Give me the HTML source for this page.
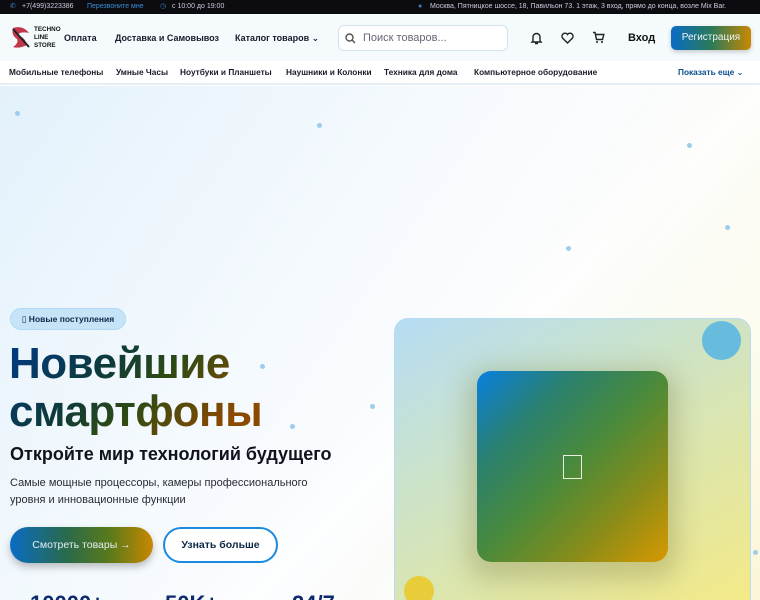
<!DOCTYPE html>
<html><head><meta charset="utf-8"><style>
*{margin:0;padding:0;box-sizing:border-box}
html,body{width:760px;height:600px;overflow:hidden}
body{font-family:"Liberation Sans","DejaVu Sans",sans-serif;position:relative;background:#fff}
.top{position:absolute;left:0;top:0;width:760px;height:14px;background:#0b0b10;font-size:7px;color:#ccd;line-height:14px;white-space:nowrap}
.top span{position:absolute}
.hdr{position:absolute;top:14px;left:0;width:760px;height:47px;background:#f5fafd}
.nav{position:absolute;top:61px;left:0;width:760px;height:24px;background:#fff;border-bottom:2px solid #e6eef5;font-size:8.3px;font-weight:bold;color:#1a1a2a;white-space:nowrap}
.nav span{position:absolute;top:6px}
.hero{position:absolute;top:86px;left:0;width:760px;height:514px;overflow:hidden;background:linear-gradient(125deg,#e3f1fb 0%,#f3f9fd 35%,#fafcfe 55%,#fdfcf2 80%,#fbf6d8 100%)}
.dot{position:absolute;width:5px;height:5px;border-radius:50%;background:#9ccdee}
.hl{font-size:9px;font-weight:bold;color:#1a1a2a;position:absolute;top:19px;white-space:nowrap}
</style></head><body>
<div class="top">
<span style="left:10px;color:#3a7fc0">✆</span><span style="left:22px">+7(499)3223386</span><span style="left:87px;color:#3a8fd8">Перезвоните мне</span><span style="left:160px;color:#3a7fc0">◷</span><span style="left:172px">с 10:00 до 19:00</span>
<span style="left:418px;color:#3a7fc0">●</span><span style="left:430px">Москва, Пятницкое шоссе, 18, Павильон 73. 1 этаж, 3 вход, прямо до конца, возле Mix Bar.</span>
</div>
<div class="hdr">
<svg style="position:absolute;left:9px;top:11px" width="24" height="26" viewBox="0 0 24 26"><path d="M4 3 Q14 0 20 8 Q12 6 8 10 Q16 12 18 20 Q10 24 4 22 Q10 18 8 14 Q2 10 4 3Z" fill="#c2364a"/><path d="M4 4 L20 22" stroke="#222" stroke-width="2"/></svg>
<div style="position:absolute;left:34px;top:12px;font-size:6.3px;font-weight:bold;line-height:8px;color:#111">TECHNO<br>LINE<br>STORE</div>
<div class="hl" style="left:64px">Оплата</div>
<div class="hl" style="left:115px">Доставка и Самовывоз</div>
<div class="hl" style="left:235px">Каталог товаров ⌄</div>
<div style="position:absolute;left:338px;top:11px;width:170px;height:26px;border:1.5px solid #d6e2ee;border-radius:6px;background:#fff;font-size:11px;color:#667;padding:6px 0 0 24px">Поиск товаров...</div>
<svg style="position:absolute;left:345px;top:19px" width="11" height="11" viewBox="0 0 11 11"><circle cx="4.5" cy="4.5" r="3.5" stroke="#555" stroke-width="1.4" fill="none"/><path d="M7 7l3 3" stroke="#555" stroke-width="1.4"/></svg>
<svg style="position:absolute;left:530px;top:17px" width="13" height="14" viewBox="0 0 13 14"><path d="M3 10V6a3.5 3.5 0 017 0v4l1 1H2z M5 12.5h3" stroke="#222" stroke-width="1.4" fill="none"/></svg>
<svg style="position:absolute;left:561px;top:18px" width="13" height="12" viewBox="0 0 13 12"><path d="M6.5 11L1.5 6A2.8 2.8 0 016.5 2.5 2.8 2.8 0 0111.5 6z" stroke="#222" stroke-width="1.4" fill="none"/></svg>
<svg style="position:absolute;left:592px;top:17px" width="13" height="13" viewBox="0 0 13 13"><path d="M1 1.5h2l1.5 7h6l1.3-5H4" stroke="#222" stroke-width="1.4" fill="none"/><circle cx="5" cy="11" r="1" fill="#222"/><circle cx="10" cy="11" r="1" fill="#222"/></svg>
<div style="position:absolute;left:628px;top:18px;font-size:11px;font-weight:bold;color:#111">Вход</div>
<div style="position:absolute;left:671px;top:12px;width:80px;height:24px;border-radius:5px;background:linear-gradient(90deg,#0a6cc4,#2a7a5a,#c98800);color:#f0f4f8;font-size:10px;text-align:center;line-height:24px;box-shadow:0 2px 5px rgba(0,0,0,.2)">Регистрация</div>
</div>
<div class="nav">
<span style="left:9px">Мобильные телефоны</span><span style="left:116px">Умные Часы</span><span style="left:180px">Ноутбуки и Планшеты</span><span style="left:286px">Наушники и Колонки</span><span style="left:384px">Техника для дома</span><span style="left:474px">Компьютерное оборудование</span><span style="left:678px;color:#0a4f8f">Показать еще ⌄</span>
</div>
<div class="hero">
<div style="position:absolute;left:0;top:0;width:760px;height:514px;background:linear-gradient(135deg,transparent 55%,rgba(255,255,255,.6) 60%,transparent 66%)"></div>
<div class="dot" style="left:15px;top:25px"></div><div class="dot" style="left:317px;top:37px"></div><div class="dot" style="left:687px;top:57px"></div><div class="dot" style="left:725px;top:139px"></div><div class="dot" style="left:566px;top:160px"></div><div class="dot" style="left:260px;top:278px"></div><div class="dot" style="left:370px;top:318px"></div><div class="dot" style="left:290px;top:338px"></div><div class="dot" style="left:753px;top:464px"></div>
<div style="position:absolute;left:10px;top:222px;width:116px;height:22px;border-radius:11px;background:#c6e4f8;border:1px solid #b0d8f4;font-size:8.5px;font-weight:bold;color:#0d2a48;line-height:20px;text-align:center">▯ Новые поступления</div>
<div style="position:absolute;left:9px;top:254px;font-size:44px;font-weight:bold;line-height:48px;background:linear-gradient(135deg,#003a8a 0%,#0d3a3a 35%,#2e4a14 55%,#8a4a00 85%);-webkit-background-clip:text;color:transparent;letter-spacing:-0.5px">Новейшие<br>смартфоны</div>
<div style="position:absolute;left:10px;top:358px;font-size:18px;font-weight:bold;color:#12121e">Откройте мир технологий будущего</div>
<div style="position:absolute;left:10px;top:389px;font-size:11px;line-height:17px;color:#2a2a36">Самые мощные процессоры, камеры профессионального<br>уровня и инновационные функции</div>
<div style="position:absolute;left:10px;top:441px;width:143px;height:36px;border-radius:18px;background:linear-gradient(90deg,#0a6cc4,#2a6a4a 40%,#5a7a1a 70%,#c98800);color:#e8eef4;font-size:10.5px;line-height:36px;text-align:center;box-shadow:0 4px 8px rgba(0,0,0,.25)">Смотреть товары →</div>
<div style="position:absolute;left:163px;top:441px;width:115px;height:36px;border-radius:18px;border:2px solid #1a8ae0;color:#0d2a48;font-size:10.5px;font-weight:bold;line-height:32px;text-align:center;background:#fff">Узнать больше</div>
<div style="position:absolute;left:30px;top:505px;font-size:22px;font-weight:bold;color:#0d2a70">10000+</div>
<div style="position:absolute;left:165px;top:505px;font-size:22px;font-weight:bold;color:#0d2a70">50K+</div>
<div style="position:absolute;left:292px;top:505px;font-size:22px;font-weight:bold;color:#0d2a70">24/7</div>
<div style="position:absolute;left:394px;top:232px;width:357px;height:300px;border-radius:14px;border:1px solid #b8dcf0;background:linear-gradient(150deg,#b6dcf4 0%,#c8e2d0 30%,#dfe6a8 65%,#f6ea84 100%)"></div>
<div style="position:absolute;left:702px;top:235px;width:39px;height:39px;border-radius:50%;background:#67bcde"></div>
<div style="position:absolute;left:404px;top:490px;width:30px;height:30px;border-radius:50%;background:#e8cc3a"></div>
<div style="position:absolute;left:477px;top:285px;width:191px;height:191px;border-radius:14px;background:linear-gradient(135deg,#0880e0 0%,#2a8070 25%,#4a8a3a 50%,#8a8c18 75%,#d89800 100%);box-shadow:0 8px 24px 10px rgba(120,120,60,.3)"></div>
<div style="position:absolute;left:563px;top:369px;width:19px;height:24px;border:1.5px solid #e8eee0"></div>
</div>
</body></html>
